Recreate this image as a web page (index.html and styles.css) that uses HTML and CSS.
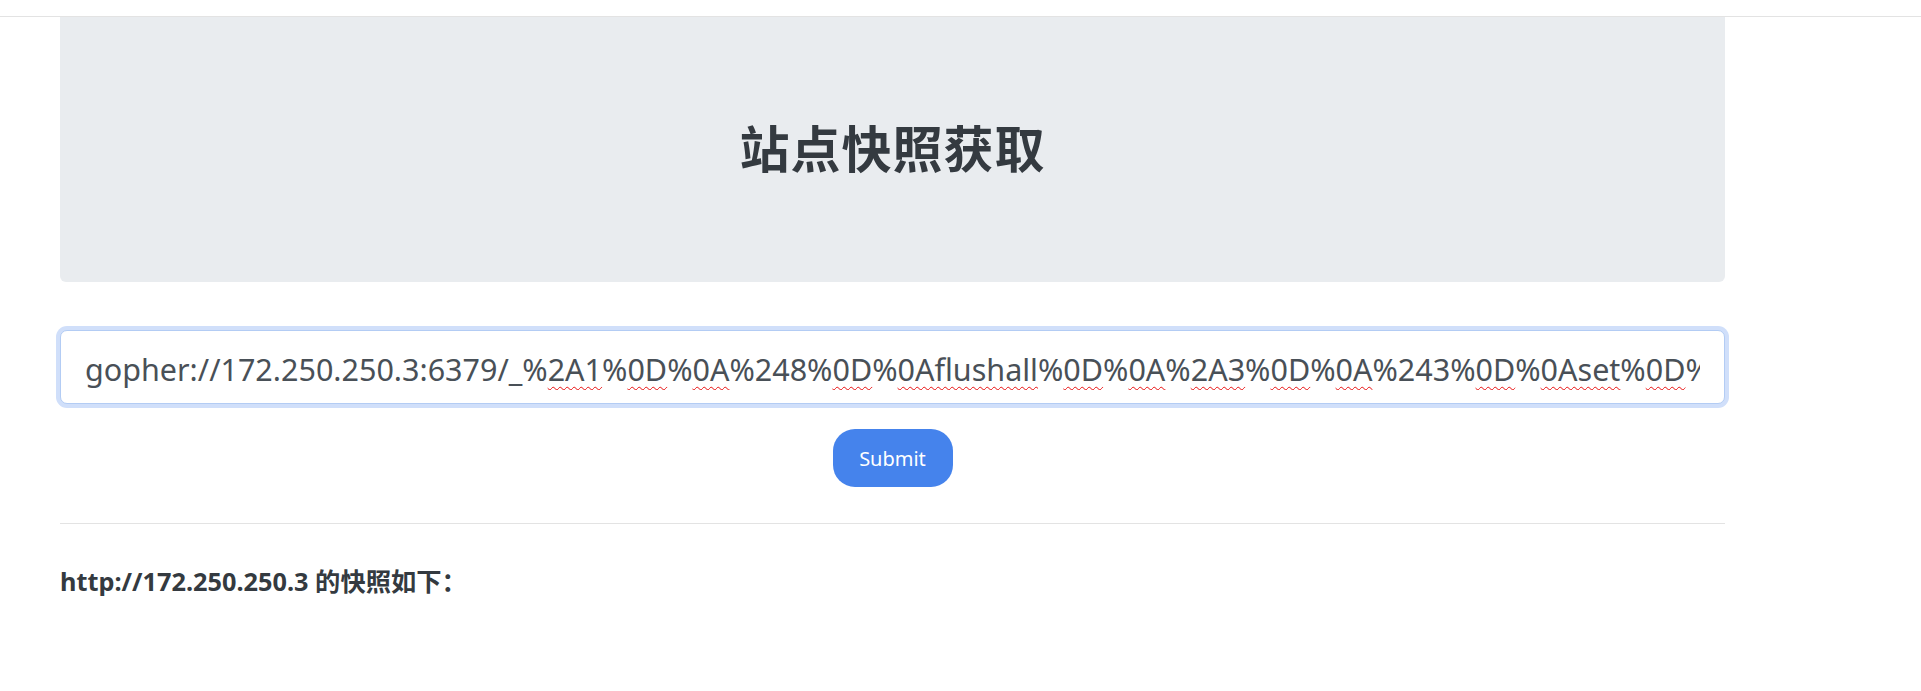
FILE: index.html
```html
<!DOCTYPE html>
<html lang="zh-CN">
<head>
  <meta charset="UTF-8" />
  <meta name="viewport" content="width=device-width, initial-scale=1.0" />
  <title>站点快照获取</title>
  <link rel="stylesheet" href="styles.css">
</head>
<body>
  <div class="topbar"></div>
  <main class="container">
    <div class="jumbotron">
      <h1>站点快照获取</h1>
    </div>

    <form class="snap-form">
      <div class="url-field" role="textbox">
        <div class="url-text">gopher://172.250.250.3:6379/_%<span class="typo">2A1</span>%<span class="typo">0D</span>%<span class="typo">0A</span>%248%<span class="typo">0D</span>%<span class="typo">0Aflushall</span>%<span class="typo">0D</span>%<span class="typo">0A</span>%<span class="typo">2A3</span>%<span class="typo">0D</span>%<span class="typo">0A</span>%243%<span class="typo">0D</span>%<span class="typo">0Aset</span>%<span class="typo">0D</span>%<span class="typo">0A</span>%241%<span class="typo">0D</span>%<span class="typo">0A1</span>%<span class="typo">0D</span>%<span class="typo">0A</span></div>
      </div>
      <button type="button" class="btn-submit">Submit</button>
    </form>

    <hr>

    <h6 class="result-title">http://172.250.250.3 的快照如下：</h6>
  </main>
</body>
</html>
```

FILE: styles.css
```css
:root {
  --text-dark: #343a40;
  --input-text: #495057;
  --jumbo-bg: #e9ecef;
  --focus-border: #b3ccf4;
  --focus-glow: #d0dffa;
  --primary: #4583ec;
  --rule: #e3e3e3;
}

* {
  box-sizing: border-box;
}

body {
  margin: 0;
  background: #fff;
  color: var(--text-dark);
  font-family: "Noto Sans", "Noto Sans CJK SC", sans-serif;
}

.topbar {
  height: 17px;
  border-bottom: 1px solid var(--rule);
}

.container {
  width: 1665px;
  margin-left: 60px;
}

/* header block */
.jumbotron {
  height: 265px;
  background: var(--jumbo-bg);
  border-radius: 0 0 6px 6px;
  display: flex;
  align-items: center;
  justify-content: center;
  padding-bottom: 8px;
}

.jumbotron h1 {
  margin: 0;
  font-family: "Noto Sans CJK SC", sans-serif;
  font-size: 50px;
  font-weight: 700;
  letter-spacing: 1px;
  color: var(--text-dark);
}

/* url form */
.snap-form {
  margin-top: 48px;
  display: flex;
  flex-direction: column;
  align-items: center;
  gap: 25px;
}

.url-field {
  width: 100%;
  height: 74px;
  padding: 4px 24px 0 24px;
  display: flex;
  align-items: center;
  background: #fff;
  border: 1px solid var(--focus-border);
  border-radius: 7px;
  box-shadow: 0 0 0 4px var(--focus-glow);
}

.url-text {
  width: 100%;
  overflow: hidden;
  white-space: nowrap;
  font-size: 30.5px;
  line-height: 1.4;
  color: var(--input-text);
}

/* spell-check style underline */
.typo {
  text-decoration: underline wavy #e81010;
  text-decoration-thickness: 1px;
  text-underline-offset: 5px;
}

.btn-submit {
  width: 120px;
  height: 58px;
  border: none;
  border-radius: 22px;
  background: var(--primary);
  color: #fff;
  font-family: "Noto Sans", sans-serif;
  font-size: 20px;
}

hr {
  margin: 36px 0 0;
  border: 0;
  border-top: 1px solid var(--rule);
}

.result-title {
  margin: 42px 0 0;
  font-size: 25.3px;
  font-weight: 700;
  line-height: 1.2;
  color: var(--text-dark);
}
```
